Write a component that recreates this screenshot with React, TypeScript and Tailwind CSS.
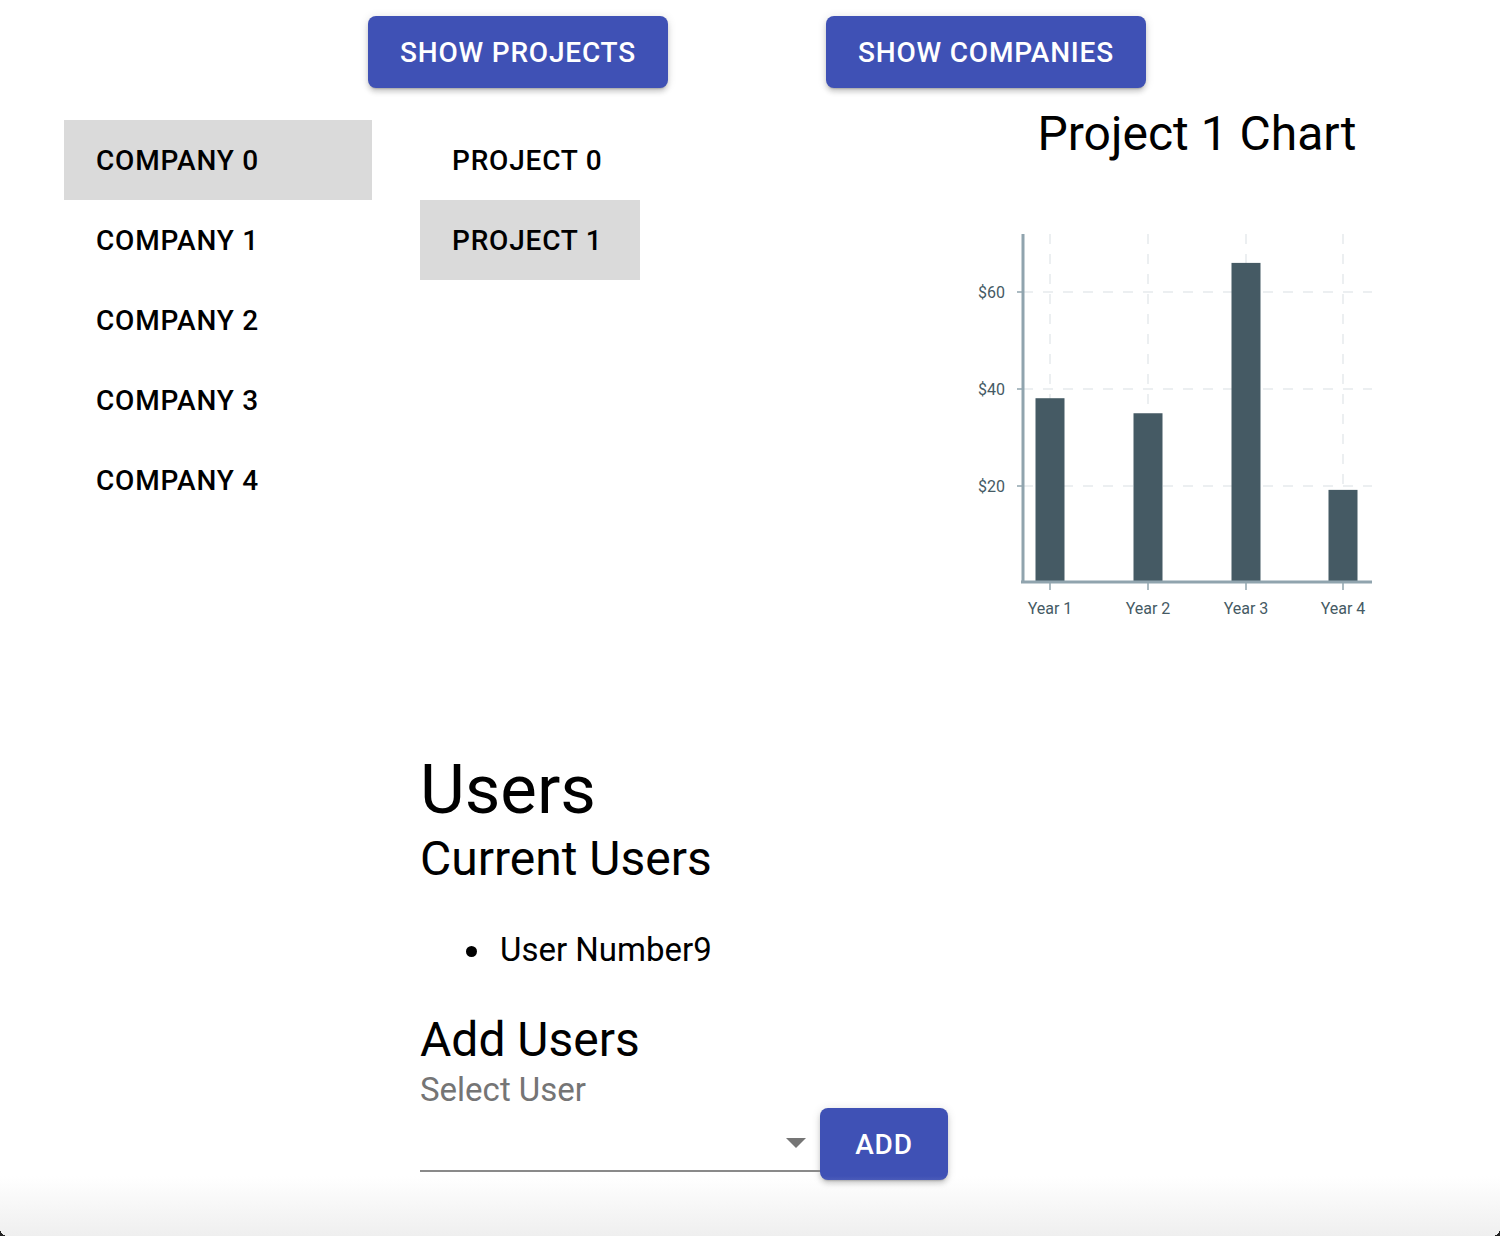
import React from "react";

const companies = ["Company 0", "Company 1", "Company 2", "Company 3", "Company 4"];
const projects = ["Project 0", "Project 1"];

// values read off the reference chart ($ per year)
const chartData = [
  { label: "Year 1", x: 1050, value: 38.1 },
  { label: "Year 2", x: 1148, value: 35 },
  { label: "Year 3", x: 1246, value: 66 },
  { label: "Year 4", x: 1343, value: 19.2 },
];
const yZero = 583;
const pxPerDollar = 4.85;

function ProjectChart(): JSX.Element {
  return (
    <svg width="420" height="410" viewBox="960 220 420 410" className="block">
      {chartData.map((d) => (
        <line key={d.label} x1={d.x} y1={234} x2={d.x} y2={582} stroke="#eceff1" strokeWidth="2" strokeDasharray="10 10" />
      ))}
      {[292, 389, 486].map((y) => (
        <line key={y} x1={1023} y1={y} x2={1372} y2={y} stroke="#eceff1" strokeWidth="2" strokeDasharray="10 10" />
      ))}
      {chartData.map((d) => (
        <rect key={d.label} x={d.x - 14.5} y={yZero - d.value * pxPerDollar} width="29" height={d.value * pxPerDollar} fill="#455a64" />
      ))}
      <line x1={1023} y1={234} x2={1023} y2={583} stroke="#90a4ae" strokeWidth="3" />
      <line x1={1021} y1={582} x2={1372} y2={582} stroke="#90a4ae" strokeWidth="3" />
      {[
        { y: 292, t: "$60" },
        { y: 389, t: "$40" },
        { y: 486, t: "$20" },
      ].map((tk) => (
        <g key={tk.t}>
          <line x1={1017} y1={tk.y} x2={1023} y2={tk.y} stroke="#90a4ae" strokeWidth="1.5" />
          <text x={1005} y={tk.y + 5.5} textAnchor="end" fontSize="16" fill="#455a64" fontFamily="Roboto, sans-serif">
            {tk.t}
          </text>
        </g>
      ))}
      {chartData.map((d) => (
        <g key={d.label}>
          <line x1={d.x} y1={583} x2={d.x} y2={590} stroke="#90a4ae" strokeWidth="1.5" />
          <text x={d.x} y={614} textAnchor="middle" fontSize="16" fill="#455a64" fontFamily="Roboto, sans-serif">
            {d.label}
          </text>
        </g>
      ))}
    </svg>
  );
}

function ActionButton({ children, className }: { children: React.ReactNode; className?: string }): JSX.Element {
  return (
    <button
      className={
        "h-[72px] pt-px rounded-lg bg-[#3f51b5] text-white text-[28px] font-medium uppercase tracking-[0.8px] shadow-[0_3px_2px_-2px_rgba(0,0,0,0.2),0_4px_5px_0_rgba(0,0,0,0.14),0_1px_10px_0_rgba(0,0,0,0.12)] " +
        (className ?? "")
      }
    >
      {children}
    </button>
  );
}

export default function App(): JSX.Element {
  const selectedCompany = 0;
  const selectedProject = 1;

  return (
    <div className="relative h-[1236px] w-full overflow-hidden bg-white text-black font-['Roboto',sans-serif]">
      <div className="flex pl-[368px] pt-4 gap-[158px]">
        <ActionButton className="w-[300px]">Show Projects</ActionButton>
        <ActionButton className="w-[320px]">Show Companies</ActionButton>
      </div>

      <div className="flex mt-8">
        <div className="ml-16 w-[308px] flex flex-col">
          {companies.map((c, i) => (
            <div
              key={c}
              className={
                "h-20 pt-px flex items-center pl-8 text-[28px] font-medium uppercase tracking-[0.8px] " +
                (i === selectedCompany ? "bg-[#dadada]" : "")
              }
            >
              {c}
            </div>
          ))}
        </div>
        <div className="ml-12 w-[220px] flex flex-col">
          {projects.map((p, i) => (
            <div
              key={p}
              className={
                "h-20 pt-px flex items-center pl-8 text-[28px] font-medium uppercase tracking-[0.8px] " +
                (i === selectedProject ? "bg-[#dadada]" : "")
              }
            >
              {p}
            </div>
          ))}
        </div>
        <div className="ml-[320px] flex flex-col">
          <h2 className="w-[474px] text-center text-[48px] leading-[56px] -mt-[14px]">Project 1 Chart</h2>
          <div className="mt-[58px]">
            <ProjectChart />
          </div>
        </div>
      </div>

      <div className="ml-[420px] mt-[124px] w-[600px]">
        <h1 className="text-[69px] leading-[72px]">Users</h1>
        <h2 className="mt-[5px] text-[48px] leading-[56px]">Current Users</h2>
        <ul className="mt-[39px] pl-20 text-[33px] leading-[48px]">
          <li className="relative">
            <span className="absolute -left-[34px] top-[20px] w-[11px] h-[11px] rounded-full bg-black" />
            User Number9
          </li>
        </ul>
        <h2 className="mt-[38px] text-[48px] leading-[56px]">Add Users</h2>
        <div className="mt-[4px] text-[33px] leading-[36px] text-[#757575]">Select User</div>
        <div className="flex items-end">
          <div className="relative w-[400px] h-[61px] border-b-2 border-[#8a8a8a]">
            <svg className="absolute right-[14px] top-[27px]" width="20" height="10" viewBox="0 0 20 10">
              <path d="M0 0 L20 0 L10 10 Z" fill="#757575" />
            </svg>
          </div>
          <ActionButton className="w-32 mb-[-8px]">Add</ActionButton>
        </div>
      </div>

      <div className="pointer-events-none absolute bottom-0 left-0 right-0 h-[60px] bg-gradient-to-b from-white/0 to-[#efefef]" />
      <div className="pointer-events-none absolute bottom-0 left-0 w-2 h-2 bg-[radial-gradient(circle_at_100%_0%,transparent_8px,#222_8px)]" />
      <div className="pointer-events-none absolute bottom-0 right-0 w-2 h-2 bg-[radial-gradient(circle_at_0%_0%,transparent_8px,#222_8px)]" />
    </div>
  );
}
